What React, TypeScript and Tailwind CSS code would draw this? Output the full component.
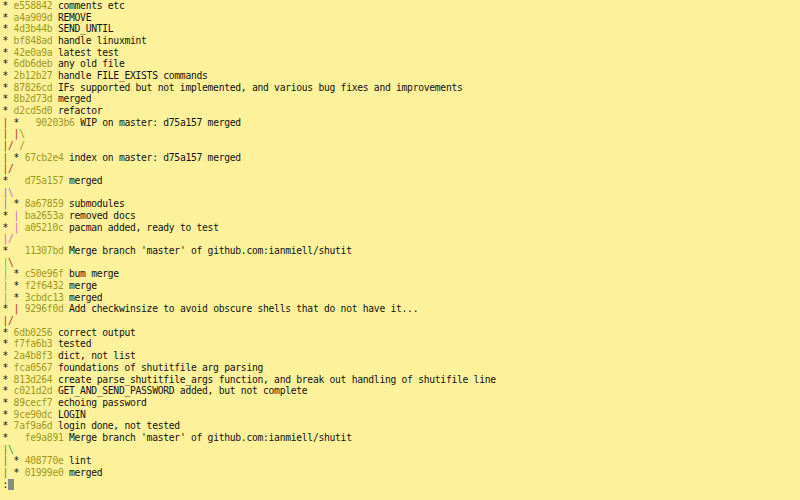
type Line = { g: string; gc: string; hash?: string; msg?: string }

const COLOR: Record<string, string> = {
  r: 'text-[#c42a24]',
  g: 'text-[#35982f]',
  y: 'text-[#9e971c]',
  b: 'text-[#7378cc]',
  m: 'text-[#d262d0]',
  c: 'text-[#31bfae]',
  k: 'text-[#111]',
}

const c = (g: string, gc: string, hash?: string, msg?: string): Line => ({ g, gc, hash, msg })

const LINES: Line[] = [
  c('* ', 'k ', 'e558842', 'comments etc'),
  c('* ', 'k ', 'a4a909d', 'REMOVE'),
  c('* ', 'k ', '4d3b44b', 'SEND_UNTIL'),
  c('* ', 'k ', 'bf848ad', 'handle linuxmint'),
  c('* ', 'k ', '42e0a9a', 'latest test'),
  c('* ', 'k ', '6db6deb', 'any old file'),
  c('* ', 'k ', '2b12b27', 'handle FILE_EXISTS commands'),
  c('* ', 'k ', '87826cd', 'IFs supported but not implemented, and various bug fixes and improvements'),
  c('* ', 'k ', '8b2d73d', 'merged'),
  c('* ', 'k ', 'd2cd5d0', 'refactor'),
  c('| *   ', 'r k   ', '90203b6', 'WIP on master: d75a157 merged'),
  c('| |\\', 'r ry'),
  c('|/ /', 'rr y'),
  c('| * ', 'r k ', '67cb2e4', 'index on master: d75a157 merged'),
  c('|/', 'rr'),
  c('*   ', 'k   ', 'd75a157', 'merged'),
  c('|\\', 'bm'),
  c('| * ', 'b k ', '8a67859', 'submodules'),
  c('* | ', 'k m ', 'ba2653a', 'removed docs'),
  c('* | ', 'k m ', 'a05210c', 'pacman added, ready to test'),
  c('|/', 'mm'),
  c('*   ', 'k   ', '11307bd', "Merge branch 'master' of github.com:ianmiell/shutit"),
  c('|\\', 'cr'),
  c('| * ', 'c k ', 'c50e96f', 'bum merge'),
  c('| * ', 'c k ', 'f2f6432', 'merge'),
  c('| * ', 'c k ', '3cbdc13', 'merged'),
  c('* | ', 'k r ', '9296f0d', 'Add checkwinsize to avoid obscure shells that do not have it...'),
  c('|/', 'rr'),
  c('* ', 'k ', '6db0256', 'correct output'),
  c('* ', 'k ', 'f7fa6b3', 'tested'),
  c('* ', 'k ', '2a4b8f3', 'dict, not list'),
  c('* ', 'k ', 'fca0567', 'foundations of shutitfile arg parsing'),
  c('* ', 'k ', '813d264', 'create parse_shutitfile_args function, and break out handling of shutifile line'),
  c('* ', 'k ', 'c021d2d', 'GET_AND_SEND_PASSWORD added, but not complete'),
  c('* ', 'k ', '89cecf7', 'echoing password'),
  c('* ', 'k ', '9ce90dc', 'LOGIN'),
  c('* ', 'k ', '7af9a6d', 'login done, not tested'),
  c('*   ', 'k   ', 'fe9a891', "Merge branch 'master' of github.com:ianmiell/shutit"),
  c('|\\', 'gg'),
  c('| * ', 'g k ', '408770e', 'lint'),
  c('| * ', 'g k ', '01999e0', 'merged'),
]

function GraphLine({ line }: { line: Line }) {
  return (
    <div className="h-[11.675px] whitespace-pre">
      {line.g.split('').map((ch, i) => (
        <span key={i} className={COLOR[line.gc[i]] ?? ''}>
          {ch}
        </span>
      ))}
      {line.hash && <span className="text-[#9e971c]">{line.hash}</span>}
      {line.msg && <span> {line.msg}</span>}
    </div>
  )
}

export default function App() {
  return (
    <div className="h-[500px] w-full overflow-hidden bg-[#fdf29b]">
      <div
        className="pl-[2.5px] text-[9.7px] leading-[11.675px] tracking-[-0.29px] text-[#111]"
        style={{ fontFamily: '"DejaVu Sans Mono", "Liberation Mono", monospace' }}
      >
        {LINES.map((l, i) => (
          <GraphLine key={i} line={l} />
        ))}
        <div className="flex h-[11.675px] items-center whitespace-pre">
          <span>:</span>
          <span className="inline-block h-[11px] w-[5.5px] bg-[#8a8a86]" />
        </div>
      </div>
    </div>
  )
}
